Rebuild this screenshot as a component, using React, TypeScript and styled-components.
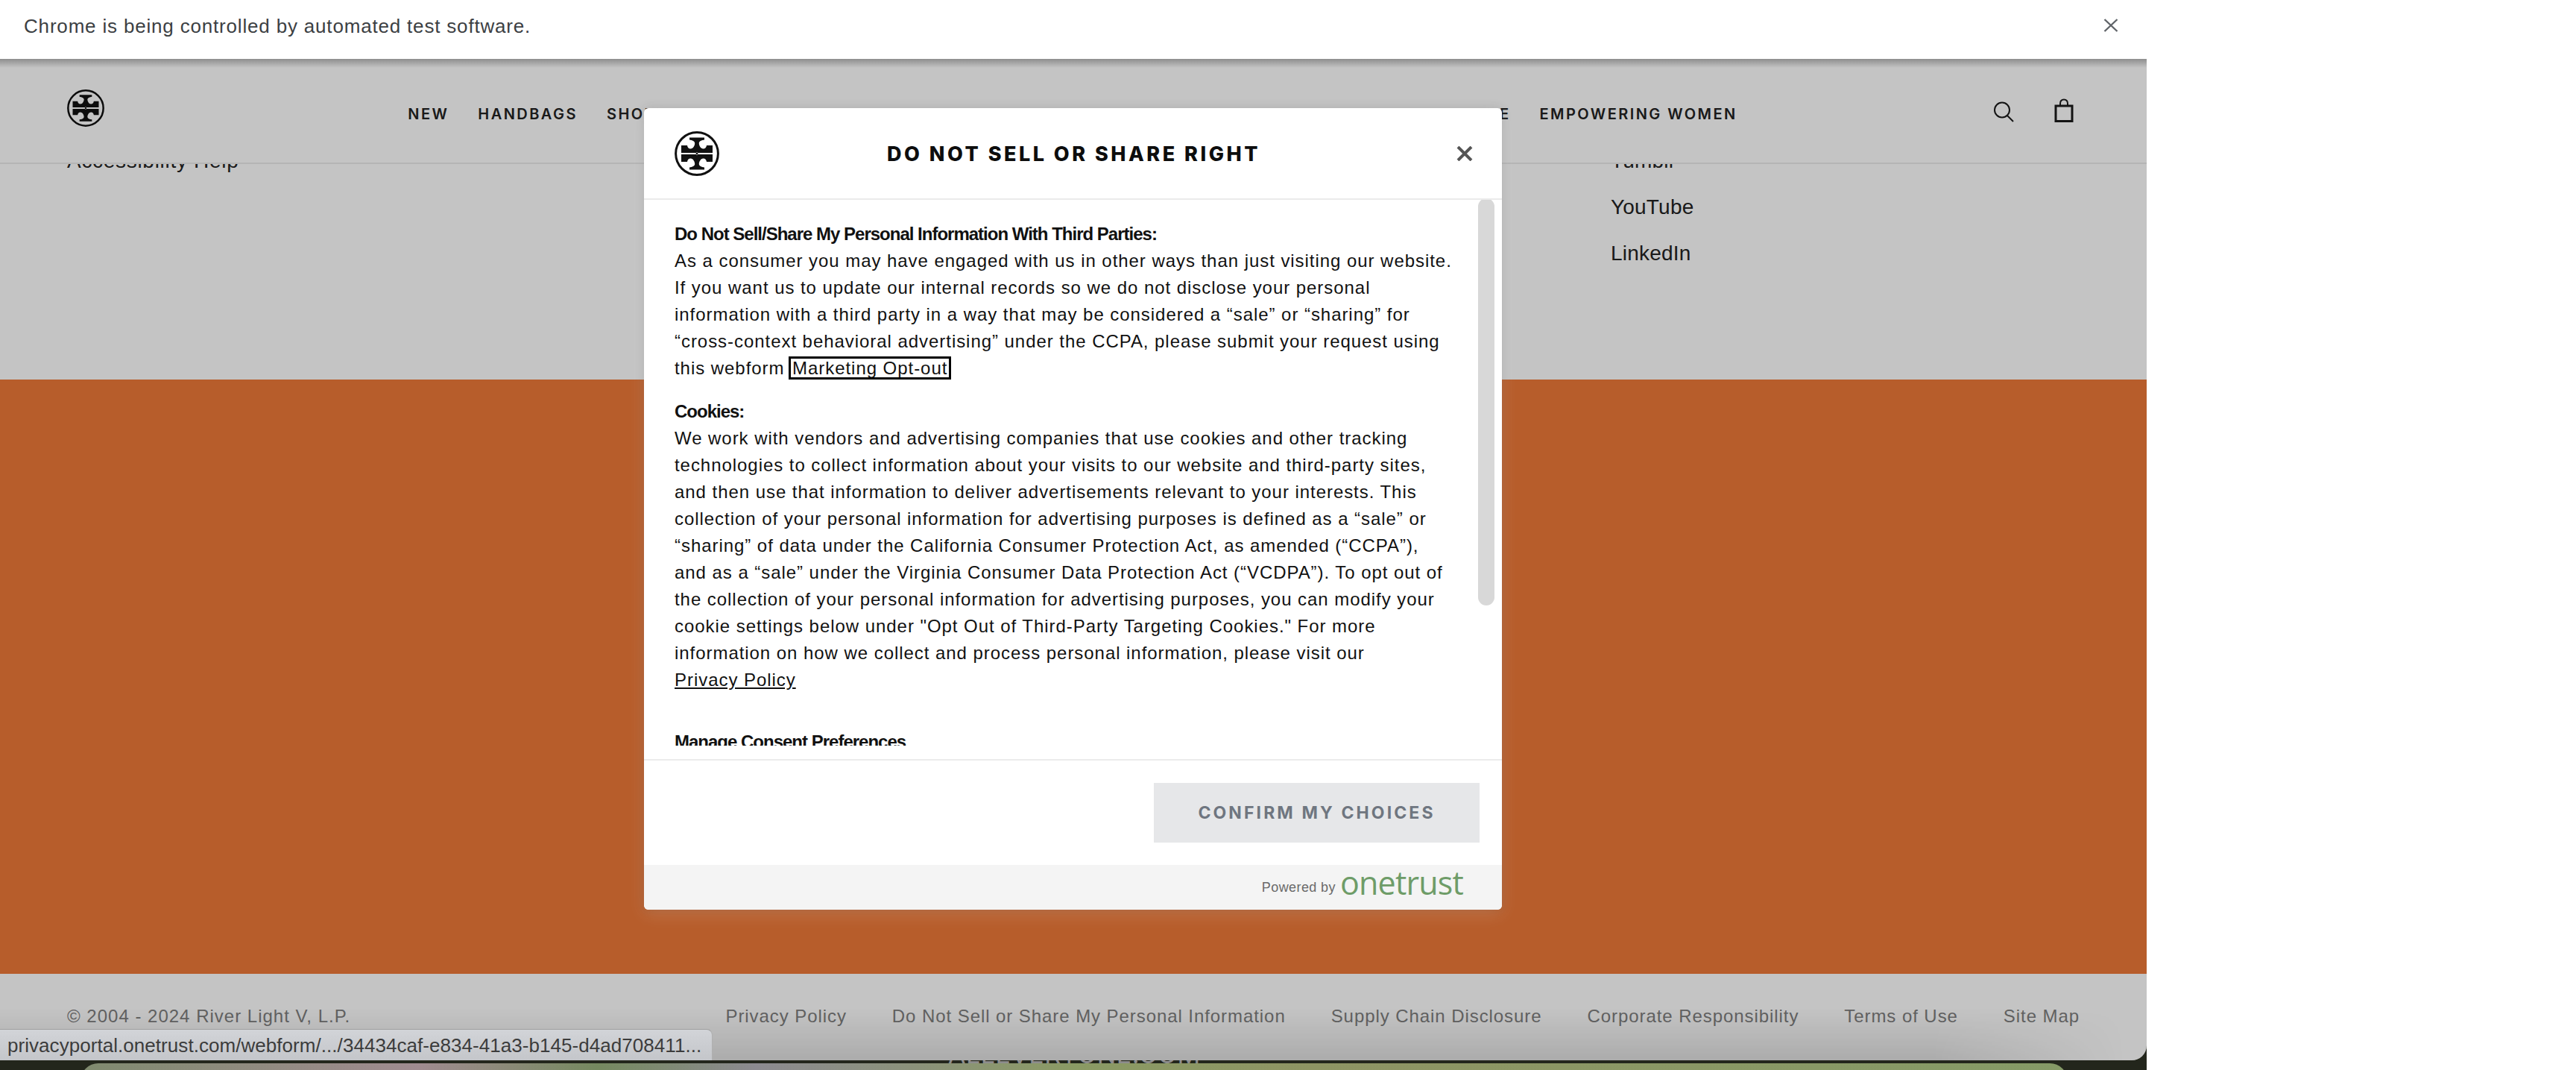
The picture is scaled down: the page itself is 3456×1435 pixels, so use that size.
import styled, {createGlobalStyle} from "styled-components"

const NAV_ITEMS = ["NEW", "HANDBAGS", "SHOES", "CLOTHING", "ACCESSORIES", "JEWELRY", "WATCHES", "SPORT", "HOME & GIFTING", "SALE", "EMPOWERING WOMEN"]
const LEGAL_LINKS = ["Privacy Policy", "Do Not Sell or Share My Personal Information", "Supply Chain Disclosure", "Corporate Responsibility", "Terms of Use", "Site Map"]

const LOGO_HALF = "M30 18.600H50V21.600C46 22 43 23.500 42.800 26C42.800 29 45 33.500 48.500 33.500C51 33.500 52.800 31.500 53 29H61V38.900H41V38.200H39V38.900H19V29H27C27.200 31.500 29 33.500 31.500 33.500C35 33.500 37.200 29 37.200 26C37 23.500 34 22 30 21.600Z"

const Logo = ({size}: {size: number}) => (
    <svg width={size} height={size} viewBox="10 10 60 60">
        <circle cx="40" cy="40" r="28.400" fill="none" stroke="#111" strokeWidth="3" />
        <g fill="#111">
            <path d={LOGO_HALF} />
            <path d={LOGO_HALF} transform="matrix(1 0 0 -1 0 80)" />
            <circle cx="40" cy="40" r="1.400" />
        </g>
    </svg>
)

export default function App() {
    return (
        <Window>
            <GlobalStyle />
            <BehindText>ALLEVERYONE.COM</BehindText>
            <InfoBar>
                <InfoText>Chrome is being controlled by automated test software.</InfoText>
                <InfoClose width="20" height="18" viewBox="0 0 20 18">
                    <path d="M1.500 1L18.500 17M18.500 1L1.500 17" stroke="#5f6368" strokeWidth="2.400" />
                </InfoClose>
            </InfoBar>

            <Page>
                <Header>
                    <LogoSlot><Logo size={50} /></LogoSlot>
                    <Nav>
                        {NAV_ITEMS.map((item) => <NavItem key={item}>{item}</NavItem>)}
                    </Nav>
                    <HeaderIcons>
                        <HeaderIcon width="28" height="28" viewBox="0 0 28 28" fill="none" stroke="#1a1a1a" strokeWidth="2">
                            <circle cx="12" cy="11.500" r="10" />
                            <path d="M19 19L27 27" />
                        </HeaderIcon>
                        <HeaderIcon width="26" height="32" viewBox="0 0 26 32" fill="none" stroke="#1a1a1a">
                            <rect x="2" y="10" width="22" height="20.500" strokeWidth="3" />
                            <path d="M8 9V7C8 3.500 10 1.500 13 1.500S18 3.500 18 7V9" strokeWidth="2" />
                        </HeaderIcon>
                    </HeaderIcons>
                </Header>

                <LinkColumns>
                    <LinkList>
                        <FooterLink $spacing={0.7}>Accessibility Help</FooterLink>
                    </LinkList>
                    <LinkList>
                        <FooterLink>Tumblr</FooterLink>
                        <FooterLink>YouTube</FooterLink>
                        <FooterLink>LinkedIn</FooterLink>
                    </LinkList>
                </LinkColumns>

                <OrangeBand />

                <LegalRow>
                    <Copyright>© 2004 - 2024 River Light V, L.P.</Copyright>
                    <LegalLinks>
                        {LEGAL_LINKS.map((link) => <LegalLink key={link}>{link}</LegalLink>)}
                    </LegalLinks>
                </LegalRow>

                <Dim />
            </Page>

            <BehindPanel />

            <StatusBubble>privacyportal.onetrust.com/webform/.../34434caf-e834-41a3-b145-d4ad708411...</StatusBubble>

            <Modal>
                <ModalHeader>
                    <Logo size={60} />
                    <ModalTitle>DO NOT SELL OR SHARE RIGHT</ModalTitle>
                    <ModalClose width="22" height="20" viewBox="0 0 22 20">
                        <path d="M2 1L20 19M20 1L2 19" stroke="#555" strokeWidth="4" />
                    </ModalClose>
                </ModalHeader>

                <ScrollArea>
                    <Thumb />
                    <Heading>Do Not Sell/Share My Personal Information With Third Parties:</Heading>
                    <Paragraph>
                        As a consumer you may have engaged with us in other ways than just visiting our website.<br />
                        If you want us to update our internal records so we do not disclose your personal<br />
                        information with a third party in a way that may be considered a “sale” or “sharing” for<br />
                        “cross-context behavioral advertising” under the CCPA, please submit your request using<br />
                        this webform <FocusedLink>Marketing Opt-out</FocusedLink>
                    </Paragraph>
                    <Heading $gap={22}>Cookies:</Heading>
                    <Paragraph>
                        We work with vendors and advertising companies that use cookies and other tracking<br />
                        technologies to collect information about your visits to our website and third-party sites,<br />
                        and then use that information to deliver advertisements relevant to your interests. This<br />
                        collection of your personal information for advertising purposes is defined as a “sale” or<br />
                        “sharing” of data under the California Consumer Protection Act, as amended (“CCPA”),<br />
                        and as a “sale” under the Virginia Consumer Data Protection Act (“VCDPA”). To opt out of<br />
                        the collection of your personal information for advertising purposes, you can modify your<br />
                        cookie settings below under "Opt Out of Third-Party Targeting Cookies." For more<br />
                        information on how we collect and process personal information, please visit our<br />
                        <UnderlinedLink>Privacy Policy</UnderlinedLink>
                    </Paragraph>
                    <Heading $gap={47}>Manage Consent Preferences</Heading>
                </ScrollArea>

                <ModalActions>
                    <ConfirmButton>CONFIRM MY CHOICES</ConfirmButton>
                </ModalActions>

                <PoweredBar>
                    <PoweredText>Powered by</PoweredText>
                    <OneTrust>onetrust</OneTrust>
                </PoweredBar>
            </Modal>
        </Window>
    )
}

const GlobalStyle = createGlobalStyle`
    html, body {
        margin: 0;
        padding: 0;
        background: #fff;
        overflow: hidden;
    }
`

const Window = styled.div`
    position: relative;
    width: 2880px;
    height: 1435px;
    overflow: hidden;

    display: flex;
    flex-direction: column;

    font-family: "Liberation Sans", Arial, sans-serif;
    background: #23261c;
`

const InfoBar = styled.div`
    position: relative;
    flex: none;
    height: 79px;
    padding: 0 38px 0 32px;
    box-sizing: border-box;

    display: flex;
    align-items: center;
    justify-content: space-between;

    background: #fff;
`

const InfoText = styled.span`
    margin-top: -9px;
    color: #3c4043;
    font-size: 26px;
    letter-spacing: 0.82px;
`

const InfoClose = styled.svg`
    margin-top: -11px;
`

const Page = styled.div`
    position: relative;
    flex: none;
    height: 1343px;
    overflow: hidden;

    display: flex;
    flex-direction: column;

    background: #fff;
    border-bottom-right-radius: 20px;
`

const Header = styled.header`
    flex: none;
    height: 141px;
    padding: 0 98px 0 90px;
    box-sizing: border-box;

    display: grid;
    grid-template-columns: 120px 1fr 120px;
    align-items: center;

    border-bottom: 2px solid #ececec;
`

const LogoSlot = styled.div`
    display: flex;
    margin-top: -7px;
`

const Nav = styled.nav`
    display: flex;
    justify-content: center;
    gap: 39px;
    margin-top: 9px;
    margin-left: 6px;
`

const NavItem = styled.span`
    color: #222;
    font-family: Inter, sans-serif;
    font-size: 20px;
    font-weight: 600;
    letter-spacing: 2.45px;
    white-space: nowrap;
`

const HeaderIcons = styled.div`
    display: flex;
    justify-content: flex-end;
    align-items: flex-end;
    gap: 54px;
    margin-top: -1px;
`

const HeaderIcon = styled.svg`
    flex: none;
`

const LinkColumns = styled.div`
    flex: none;
    height: 289px;
    padding-left: 90px;
    overflow: hidden;

    display: grid;
    grid-template-columns: 1fr 719px;

    box-sizing: border-box;
`

const LinkList = styled.div`
    margin-top: -35px;
    display: flex;
    flex-direction: column;
`

const FooterLink = styled.span<{$spacing?: number}>`
    color: #222;
    font-size: 28px;
    line-height: 62px;
    letter-spacing: ${({$spacing}) => $spacing ?? 0.2}px;
`

const OrangeBand = styled.div`
    flex: none;
    height: 797px;
    background: #ef7a38;
`

const LegalRow = styled.div`
    position: relative;
    flex: 1;
    padding: 0 90px;

    display: flex;
    align-items: flex-start;
    justify-content: space-between;

    &::after {
        content: "";
        position: absolute;
        left: 0;
        right: 0;
        bottom: 0;
        height: 70px;
        background: linear-gradient(to bottom, rgba(0, 0, 0, 0), rgba(0, 0, 0, 0.12));
        -webkit-mask-image: linear-gradient(to right, #000 90%, transparent 99%);
        mask-image: linear-gradient(to right, #000 90%, transparent 99%);
    }
`

const Copyright = styled.span`
    margin-top: 43px;
    color: #808080;
    font-size: 24px;
    letter-spacing: 1px;
`

const LegalLinks = styled.div`
    margin-top: 43px;
    display: flex;
    gap: 61px;
`

const LegalLink = styled.span`
    color: #808080;
    font-size: 24px;
    letter-spacing: 0.93px;
    white-space: nowrap;
`

const Dim = styled.div`
    position: absolute;
    inset: 0;
    background: rgba(0, 0, 0, 0.23);

    &::before {
        content: "";
        position: absolute;
        top: 0;
        left: 0;
        right: 0;
        height: 12px;
        background: linear-gradient(to bottom, rgba(0, 0, 0, 0.28), rgba(0, 0, 0, 0));
    }
`

const BehindText = styled.div`
    position: absolute;
    left: 1272px;
    top: 1396px;
    height: 36px;
    overflow: hidden;

    color: #8d8d8d;
    font-family: Inter, sans-serif;
    font-size: 34px;
    line-height: 36px;
    letter-spacing: 0.5px;
    white-space: nowrap;
`

const BehindPanel = styled.div`
    position: absolute;
    left: 108px;
    top: 1426px;
    width: 2666px;
    height: 40px;

    border-radius: 24px 24px 0 0;
    background: linear-gradient(to right, #7f8a6e, #a08b90 17%, #75895f 26%, #8c8a90 34%, #8a9a64 50%, #8e9463 62%, #859a66 100%);
`

const StatusBubble = styled.div`
    position: absolute;
    left: 0;
    top: 1380px;
    width: 956px;
    height: 42px;
    padding-left: 10px;
    box-sizing: border-box;

    color: #3c3c3c;
    font-size: 26px;
    line-height: 42px;
    letter-spacing: 0.05px;
    white-space: nowrap;

    border-top: 1px solid #a0a0a0;
    border-right: 1px solid #b0b0b0;
    border-top-right-radius: 8px;
    background: linear-gradient(to bottom, #d2d4d8, #c4c6ca);
`

const Modal = styled.div`
    position: absolute;
    left: 864px;
    top: 145px;
    width: 1151px;
    height: 1075px;
    overflow: hidden;

    display: flex;
    flex-direction: column;

    background: #fff;
    border-radius: 6px;
    box-shadow: 0 6px 22px rgba(255, 255, 255, 0.16), 0 0 14px rgba(0, 0, 0, 0.14);
`

const ModalHeader = styled.div`
    flex: none;
    height: 123px;
    padding: 0 39px 0 41px;
    box-sizing: border-box;

    display: grid;
    grid-template-columns: 60px 1fr 60px;
    align-items: center;

    border-bottom: 2px solid #ebebeb;
`

const ModalTitle = styled.div`
    margin-top: 2px;

    color: #0d0d0d;
    font-family: Inter, sans-serif;
    font-size: 27px;
    font-weight: 800;
    letter-spacing: 3.5px;
    text-align: center;
    white-space: nowrap;
`

const ModalClose = styled.svg`
    display: block;
    justify-self: end;
`

const ScrollArea = styled.div`
    position: relative;
    flex: none;
    height: 732px;
    padding: 28px 0 0 41px;
    box-sizing: border-box;
    overflow: hidden;
`

const Thumb = styled.div`
    position: absolute;
    top: -2px;
    right: 10px;
    width: 22px;
    height: 546px;

    border-radius: 11px;
    background: #d8d8d8;
`

const Heading = styled.div<{$gap?: number}>`
    margin-top: ${({$gap}) => $gap ?? 0}px;

    color: #111;
    font-size: 24px;
    font-weight: 700;
    line-height: 36px;
    letter-spacing: -1px;
`

const Paragraph = styled.div`
    color: #111;
    font-size: 24px;
    line-height: 36px;
    letter-spacing: 0.95px;
    white-space: nowrap;
`

const FocusedLink = styled.span`
    padding: 0 3px;
    outline: 3px solid #000;
    outline-offset: -1px;
`

const UnderlinedLink = styled.span`
    text-decoration: underline;
`

const ModalActions = styled.div`
    flex: none;
    height: 142px;
    padding: 30px 30px 0 0;
    box-sizing: border-box;
    margin-top: 18px;

    display: flex;
    justify-content: flex-end;
    align-items: flex-start;

    border-top: 2px solid #ebebeb;
`

const ConfirmButton = styled.button`
    width: 437px;
    height: 80px;
    padding: 0;

    color: #6f7680;
    font-family: Inter, sans-serif;
    font-size: 23px;
    font-weight: 700;
    letter-spacing: 3.1px;

    border: none;
    background: #e6e7e9;
`

const PoweredBar = styled.div`
    flex: 1;
    padding-right: 52px;

    display: flex;
    justify-content: flex-end;
    align-items: flex-start;
    gap: 6px;

    background: #f4f4f4;
`

const PoweredText = styled.span`
    margin-top: 20px;
    color: #6a6a6a;
    font-size: 18px;
    letter-spacing: 0.4px;
`

const OneTrust = styled.span`
    color: #6e9c68;
    font-family: "Open Sans", sans-serif;
    font-size: 43px;
    font-weight: 500;
    line-height: 48px;
    letter-spacing: -0.8px;
`
